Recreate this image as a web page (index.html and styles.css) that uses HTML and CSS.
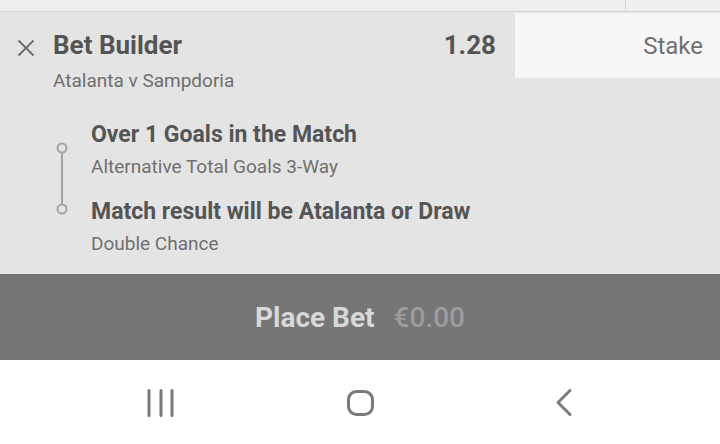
FILE: index.html
```html
<!DOCTYPE html>
<html>
<head>
<meta charset="utf-8">
<link rel="stylesheet" href="styles.css">
</head>
<body>
<div class="topstrip"><div class="topstrip-left"></div><div class="topstrip-right"></div></div>
<section class="slip">
  <div class="head">
    <div class="head-main">
      <svg class="close" width="18" height="18" viewBox="0 0 18 18"><path d="M1.5 1.5 L16.5 16.5 M16.5 1.5 L1.5 16.5" stroke="#6b6b6b" stroke-width="1.8" fill="none"/></svg>
      <span class="title">Bet Builder</span>
      <span class="odds">1.28</span>
    </div>
    <div class="stake">Stake</div>
  </div>
  <div class="match">Atalanta v Sampdoria</div>
  <div class="legs">
    <svg class="timeline" width="14" height="76" viewBox="0 0 14 76"><line x1="7" y1="12" x2="7" y2="63" stroke="#a3a3a3" stroke-width="2"/><circle cx="7" cy="7" r="4.5" fill="none" stroke="#a3a3a3" stroke-width="2"/><circle cx="7" cy="68" r="4.5" fill="none" stroke="#a3a3a3" stroke-width="2"/></svg>
    <div class="leg">
      <div class="leg-title">Over 1 Goals in the Match</div>
      <div class="leg-sub">Alternative Total Goals 3-Way</div>
    </div>
    <div class="leg">
      <div class="leg-title">Match result will be Atalanta or Draw</div>
      <div class="leg-sub">Double Chance</div>
    </div>
  </div>
</section>
<div class="place"><span class="place-label">Place Bet</span><span class="place-amount">€0.00</span></div>
<nav class="navbar">
  <svg class="nav-recent" width="30" height="30" viewBox="0 0 30 30"><path d="M4 2.5 V27.5 M16 2.5 V27.5 M27 2.5 V27.5" stroke="#7a7a7a" stroke-width="3" stroke-linecap="round" fill="none"/></svg>
  <svg class="nav-home" width="30" height="30" viewBox="0 0 30 30"><rect x="1.5" y="3.5" width="24" height="23" rx="8" ry="8" stroke="#7a7a7a" stroke-width="3" fill="none"/></svg>
  <svg class="nav-back" width="30" height="30" viewBox="0 0 30 30"><path d="M16 2.5 L4 14.5 L16 26.5" stroke="#7a7a7a" stroke-width="3" stroke-linecap="round" stroke-linejoin="round" fill="none"/></svg>
</nav>
</body>
</html>
```
FILE: styles.css
```css
* { box-sizing: border-box; }
html, body { margin: 0; padding: 0; }
body {
  width: 720px;
  height: 444px;
  overflow: hidden;
  font-family: Roboto, "Noto Sans", sans-serif;
  background: #ffffff;
}
.topstrip {
  height: 12px;
  display: flex;
  background: #efefef;
  border-bottom: 1px solid #d4d4d4;
}
.topstrip-left { width: 626px; border-right: 1px solid #d4d4d4; }
.topstrip-right { flex: 1; }
.slip {
  background: #e4e4e4;
  height: 262px;
}
.head {
  display: flex;
  height: 66px;
}
.head-main {
  flex: 1;
  display: flex;
  align-items: center;
  padding: 0 19px 0 17px;
}
.close { margin: 6px 18px 0 0; }
.title {
  font-weight: 700;
  font-size: 26px;
  color: #545454;
  flex: 1;
}
.odds {
  font-weight: 700;
  font-size: 26px;
  color: #545454;
}
.stake {
  width: 205px;
  margin-top: 1px;
  background: #f7f7f7;
  display: flex;
  align-items: center;
  justify-content: flex-end;
  padding-right: 17px;
  font-size: 24px;
  color: #707070;
}
.match {
  padding-left: 53px;
  font-size: 19px;
  color: #6e6e6e;
  margin-top: -9px;
}
.legs {
  position: relative;
  padding-left: 91px;
  margin-top: 29px;
}
.timeline {
  position: absolute;
  left: 55px;
  top: 20px;
}
.leg { margin-bottom: 19px; }
.leg-title {
  font-weight: 700;
  font-size: 23px;
  color: #555555;
  line-height: 28px;
}
.leg-sub {
  font-size: 19px;
  color: #707070;
  line-height: 24px;
  margin-top: 6px;
}
.place {
  height: 86px;
  background: #767676;
  display: flex;
  align-items: center;
  justify-content: center;
  gap: 19px;
}
.place-label {
  font-weight: 700;
  font-size: 28px;
  color: #d8d8d8;
}
.place-amount {
  font-weight: 500;
  font-size: 28px;
  color: #9c9c9c;
}
.navbar {
  height: 84px;
  display: flex;
  align-items: flex-start;
  padding: 28px 0 0 145px;
}
.nav-home { margin-left: 172px; }
.nav-back { margin-left: 177px; }
```
